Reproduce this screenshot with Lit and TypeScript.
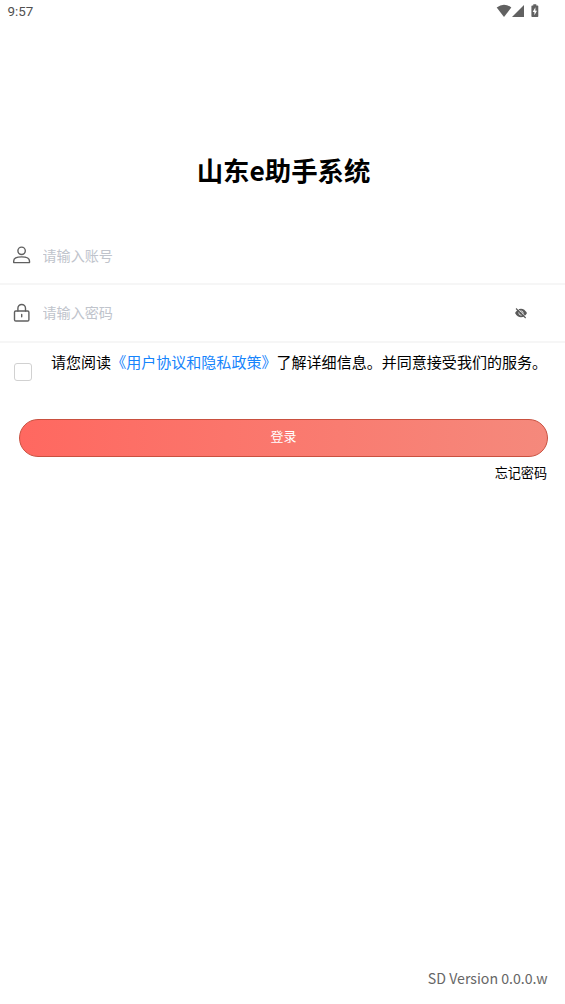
import { LitElement, html, css } from "lit";
import { customElement } from "lit/decorators.js";

@customElement("app-root")
export class AppRoot extends LitElement {
  static styles = css`
    :host { display: flex; flex-direction: column; box-sizing: border-box; height: 1004px; background: #fff; color: #000; overflow: hidden; font-family: "Noto Sans CJK SC", sans-serif; }
    * { box-sizing: border-box; }
    svg { display: block; }
    .status { display: flex; justify-content: space-between; height: 24px; padding: 0 26px 0 7.5px; font: 400 13.4px/24px Roboto, sans-serif; color: #505050; }
    .signals { display: flex; padding-top: 4px; }
    h1 { margin: 126px 0 0; padding-left: 2px; height: 40px; font-size: 26.4px; line-height: 40px; font-weight: 700; text-align: center; }
    .field { display: flex; align-items: center; height: 58px; padding: 0 37px 0 12px; border-bottom: 2px solid #f6f6f6; }
    .account { margin-top: 38px; height: 57px; padding-bottom: 2px; }
    input { flex: 1; min-width: 0; height: 24px; margin: 0 0 2px 10.5px; padding: 0; border: 0; outline: 0; background: none; font: 14.1px/24px "Noto Sans CJK SC", sans-serif; }
    .account input { margin-bottom: 0; }
    input::placeholder { color: #c0c4cc; opacity: 1; }
    .agree { display: flex; height: 50px; padding: 8px 0 0 14px; font-size: 15.04px; line-height: 22px; white-space: nowrap; }
    .box { flex: none; width: 18px; height: 18px; margin: 12px 19px 0 0; border: 1px solid #d1d1d1; border-radius: 3px; }
    .link { color: #1684fc; }
    button { height: 38px; margin: 26px 17px 0 19px; padding: 0 0 4px; border: 1px solid #c9503f; border-radius: 19px; color: #fff; background: linear-gradient(90deg, #ff6860, #f5897c); font: 13px/32px "Noto Sans CJK SC", sans-serif; }
    .forgot { margin: 6px 18px 0 0; text-align: right; font-size: 13.1px; line-height: 20px; }
    .version { margin: auto 17.5px 15px 0; text-align: right; font-size: 14.15px; line-height: 22px; color: #666; }
  `;

  render() {
    return html`
      <div class="status">
        <span>9:57</span>
        <div class="signals">
          <svg width="43" height="14" viewBox="0 0 43 14" fill="#616161">
            <path d="M0.7 3.5Q8-2 15.3 3.5L8 13Z" />
            <path d="M28 1V13H16Z" />
            <path fill-rule="evenodd" d="M37.3 1.5V.3h3v1.2h1.2q.8 0 .8.8v10q0 .8-.8.8h-5.3q-.8 0-.8-.8v-10q0-.8.8-.8ZM39.4 3.3 36.7 8h1.7v3.3L41 6.8h-1.6Z" />
          </svg>
        </div>
      </div>
      <h1>山东e助手系统</h1>
      <div class="field account">
        <svg width="20" height="20" viewBox="0 0 20 20" fill="none" stroke="#606060" stroke-width="1.4" stroke-linejoin="round">
          <circle cx="9.6" cy="5.8" r="3.7" />
          <path d="M1.7 17.6V16C1.7 13.3 4.4 11.9 9.6 11.9S17.5 13.3 17.5 16V17.6Z" />
        </svg>
        <input placeholder="请输入账号" />
      </div>
      <div class="field">
        <svg width="20" height="20" viewBox="0 0 20 20" fill="none" stroke="#606060" stroke-width="1.4" stroke-linecap="round">
          <rect x="2.5" y="8" width="14.4" height="10" rx="1.3" />
          <path d="M5.9 8V5.3a3.8 3.8 0 0 1 7.6 0V8M9.7 11.4v2.4" />
        </svg>
        <input placeholder="请输入密码" />
        <svg width="14" height="12" viewBox="0 0 14 12">
          <path d="M1 6Q3.5 1.7 7 1.7T13 6Q10.5 10.3 7 10.3T1 6Z" fill="#5a5a5a" />
          <circle cx="7" cy="6" r="2.1" fill="none" stroke="#fff" stroke-width=".8" />
          <path d="M2.7.8 12.4 10.2" stroke="#fff" stroke-width=".7" />
          <path d="M2 1.5 11.7 11" stroke="#5a5a5a" stroke-width="1.1" />
        </svg>
      </div>
      <div class="agree">
        <span class="box"></span>
        <span>请您阅读<span class="link">《用户协议和隐私政策》</span>了解详细信息。并同意接受我们的服务。</span>
      </div>
      <button>登录</button>
      <div class="forgot">忘记密码</div>
      <div class="version">SD Version 0.0.0.w</div>
    `;
  }
}
